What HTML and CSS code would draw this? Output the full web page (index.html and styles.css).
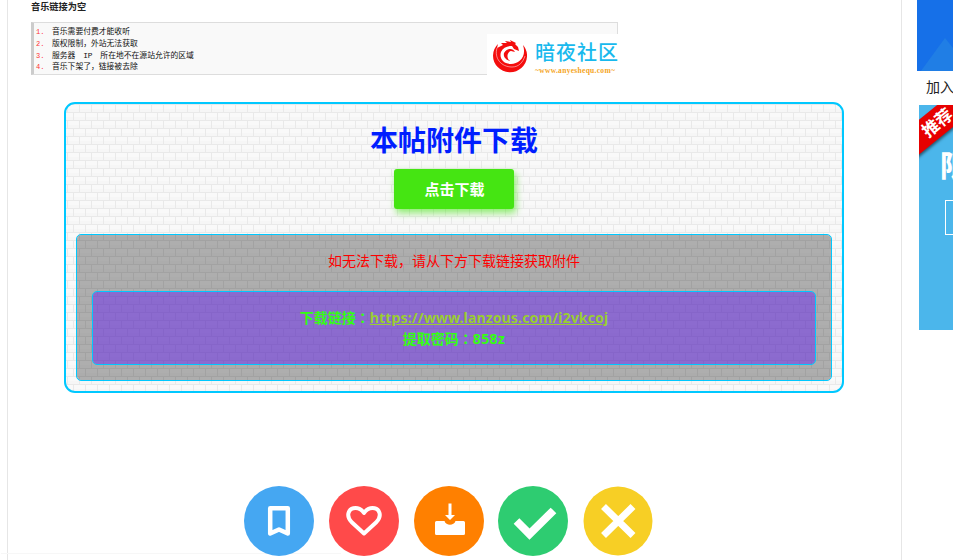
FILE: index.html
```html
<!DOCTYPE html>
<html lang="zh-CN">
<head>
<meta charset="utf-8">
<title>本帖附件下载</title>
<link rel="stylesheet" href="styles.css">
</head>
<body>
<div class="page">
  <main class="post">
    <h2 class="caption">音乐链接为空</h2>
    <div class="notes">
      <ol>
        <li>音乐需要付费才能收听</li>
        <li>版权限制，外站无法获取</li>
        <li>服务器&emsp;IP&emsp;所在地不在源站允许的区域</li>
        <li>音乐下架了，链接被去除</li>
      </ol>
      <div class="brand">
        <svg class="dragon" viewBox="0 0 36 36">
          <path fill="#f40d0d" d="M7 6A17 16.500 0 1 0 32 7C36 19 28 26 20 26C12 26 8 20 10 14C12 10 16 8 21 8L23 11L28 13L27 9L24 6L25 5L19 2L20 4L14 3L16 5L10 5L12 7L6 10Z"/>
          <path fill="#f40d0d" d="M13 15C16 10 22 10 24 14L20 13C16 14 15 20 19 23C15 22 12 19 13 15Z"/>
          <path fill="none" stroke="#fff" stroke-width=".5" d="M6 10C3 20 10 29 21 29C28 29 32 24 34 18"/>
        </svg>
        <div class="brand-text">
          <b>暗夜社区</b>
          <span>~www.anyeshequ.com~</span>
        </div>
      </div>
    </div>
    <section class="download">
      <h1>本帖附件下载</h1>
      <a class="button">点击下载</a>
      <div class="fallback">
        <p>如无法下载，请从下方下载链接获取附件</p>
        <div class="links">
          <div>下载链接<span class="colon" lang="zh-TW">：</span><a class="url">https://www.lanzous.com/i2vkcoj</a></div>
          <div>提取密码<span class="colon" lang="zh-TW">：</span><span class="code">858z</span></div>
        </div>
      </div>
    </section>
    <div class="actions">
      <svg viewBox="0 0 70 70"><circle cx="35" cy="35" r="35" fill="#45a7f2"/><path fill="none" stroke="#fff" stroke-width="4.500" stroke-linejoin="round" d="M26.200 22.200H43.800V47.500L35 43.500L26.200 47.500Z"/></svg>
      <svg viewBox="0 0 70 70"><circle cx="35" cy="35" r="35" fill="#ff4a4a"/><path fill="none" stroke="#fff" stroke-width="4" stroke-linejoin="round" d="M35 47.500L22.500 36C16.500 29.500 19.500 22 26.500 22C30.500 22 33 24 35 27C37 24 39.500 22 43.500 22C50.500 22 53.500 29.500 47.500 36Z"/></svg>
      <svg viewBox="0 0 70 70"><circle cx="35" cy="35" r="35" fill="#ff8000"/><path fill="#fff" d="M34.500 17.500H37.500V29H41L36 34L31 29H34.500ZM22.500 35H30.500C32 40 40 40 41.500 35H49.500Q51 35 51 36.500V47.500Q51 49 49.500 49H22.500Q21 49 21 47.500V36.500Q21 35 22.500 35Z"/></svg>
      <svg viewBox="0 0 70 70"><circle cx="35" cy="35" r="35" fill="#2ecc71"/><path fill="none" stroke="#fff" stroke-width="8" d="M18.500 35L31.500 48L55.500 24.500"/></svg>
      <svg viewBox="0 0 70 70"><circle cx="35" cy="35" r="34.500" fill="#f7cf25"/><path fill="none" stroke="#fff" stroke-width="7" d="M20.500 20.500L50 49.500M50 20.500L20.500 49.500"/></svg>
    </div>
    <div class="footline"></div>
  </main>
  <aside class="side">
    <svg class="banner" viewBox="0 0 36 71"><path fill="#1670e8" d="M0 0H36V71H0Z"/><path fill="#207ee5" d="M4 71L28 38L36 48V71Z"/></svg>
    <div class="join">加入</div>
    <div class="promo">
      <div class="ribbon">推荐</div>
      <div class="promo-title">限</div>
      <div class="promo-box"></div>
    </div>
  </aside>
</div>
</body>
</html>
```
FILE: styles.css
```css
* { box-sizing: border-box; }
body { margin: 0; background: #fff; overflow: hidden; font-family: "Noto Sans", "Noto Sans CJK SC", sans-serif; }
.page { display: flex; width: 953px; height: 560px; overflow: hidden; }
.post { width: 895px; margin-left: 7px; flex: none; border: solid #e6e6e6; border-width: 0 1px; position: relative; }
.caption { margin: 0 0 0 23px; height: 22px; font-size: 9.2px; line-height: 13px; font-weight: 700; color: #222; }
.notes { margin-left: 23px; width: 587px; height: 53px; background: #f9f9f9; border: 1px solid #ddd; border-left: 3px solid #ccc; position: relative; padding-top: 3px; }
.notes ol { margin: 0; padding: 0; list-style: none; counter-reset: n; }
.notes li { counter-increment: n; display: flex; height: 11.800px; font: 7.800px/12px "Liberation Mono", "Noto Sans CJK SC", monospace; color: #111; white-space: pre; }
.notes li::before { content: counter(n) "."; width: 18px; flex: none; padding-left: 2px; color: #f33; font-size: 7px; margin-right: -2px; }
.brand { position: absolute; left: 453px; top: 11px; width: 136px; height: 43px; background: #fff; display: flex; padding: 4px 0 0 4px; }
.dragon { width: 36px; height: 36px; flex: none; }
.brand-text { margin-left: 8px; width: 86px; }
.brand b { display: block; font: 500 20px/28px "Noto Sans CJK SC", sans-serif; color: #18b9ed; letter-spacing: 1px; white-space: nowrap; }
.brand span { display: block; font: 700 7.500px/9px "Liberation Serif", serif; color: #f5a51d; white-space: nowrap; letter-spacing: .3px; }
.download {
  width: 780px; height: 291px; margin: 27px 0 0 56px; padding: 17px 10px 0;
  border: 2px solid #00c8ff; border-radius: 11px;
  display: flex; flex-direction: column; align-items: center;
  background: #fafafa url("data:image/svg+xml,%3Csvg xmlns='http://www.w3.org/2000/svg' width='12' height='16'%3E%3Cpath fill='%23f9f9f9' d='M0 0h12v16H0z'/%3E%3Cpath fill='%23f6f6f6' d='M1 5h11v3H1zM0 13h6v3H0zM7 13h5v3H7z'/%3E%3Cpath fill='%23e9e9e9' d='M0 0h12v1H0zM0 8h12v1H0zM0 0h1v8H0zM6 8h1v8H6z'/%3E%3C/svg%3E") 1px 0 / 12px 16px;
}
.download h1 { margin: 0; font-size: 28px; line-height: 36px; color: #001eff; font-family: "Noto Sans CJK SC", sans-serif; }
.button { display: block; flex: none; width: 120px; height: 40px; margin-top: 12px; border-radius: 3px; background: #45e512; color: #fff; font: 700 15px/40px "Noto Sans CJK SC", sans-serif; text-align: center; box-shadow: 2px 4px 7px rgba(69,229,18,.6); padding-left: 1px; }
.fallback { width: 756px; height: 147px; flex: none; margin-top: 25px; border: 1px solid #00c8ff; border-radius: 5px; background: rgba(0,0,0,.3); padding: 15px 15px 0; }
.fallback p { margin: 0; height: 41px; text-align: center; color: #f00; font: 14px/21px "Noto Sans CJK SC", sans-serif; }
.links { height: 74px; border: 1px solid #00c8ff; border-radius: 5px; background: rgba(105,40,240,.5); padding-top: 15px; text-align: center; color: #3f1; font: 700 14px/21px "Noto Sans CJK SC", sans-serif; }
.fallback, .links { background-clip: padding-box; }
.links div { height: 21px; white-space: nowrap; }
.colon { font-family: "Noto Sans CJK TC", sans-serif; }
.url { color: #9acd32; text-decoration: underline; font-family: "Noto Sans", sans-serif; letter-spacing: .15px; }
.code { font-family: "Noto Sans", sans-serif; letter-spacing: .4px; }
.actions { display: flex; gap: 14.800px; margin: 93px 0 0 236px; position: relative; z-index: 1; }
.actions svg { width: 70px; height: 70px; flex: none; }
.footline { position: absolute; left: -7px; top: 553px; width: 340px; height: 1px; background: #f7f7f7; }
.side { margin-left: 15px; width: 36px; flex: none; overflow: hidden; }
.banner { display: block; width: 36px; height: 71px; }
.join { height: 34px; padding-left: 9px; font-size: 14px; line-height: 32px; color: #222; white-space: nowrap; }
.promo { margin-left: 2px; height: 225px; background: #4bb6eb; position: relative; overflow: hidden; }
.ribbon { position: absolute; left: -32px; top: 4px; width: 100px; height: 27px; background: #e70000; color: #fff; font: 700 17px/26px "Noto Sans CJK SC", sans-serif; text-align: center; transform: rotate(-39deg); box-shadow: 0 2px 3px rgba(0,0,0,.5); }
.promo-title { position: absolute; left: 21px; top: 42px; color: #fff; font: 900 29px/34px "Noto Sans CJK SC", sans-serif; }
.promo-box { position: absolute; left: 26px; top: 95px; width: 60px; height: 35px; border: 1px solid #fff; }
```
